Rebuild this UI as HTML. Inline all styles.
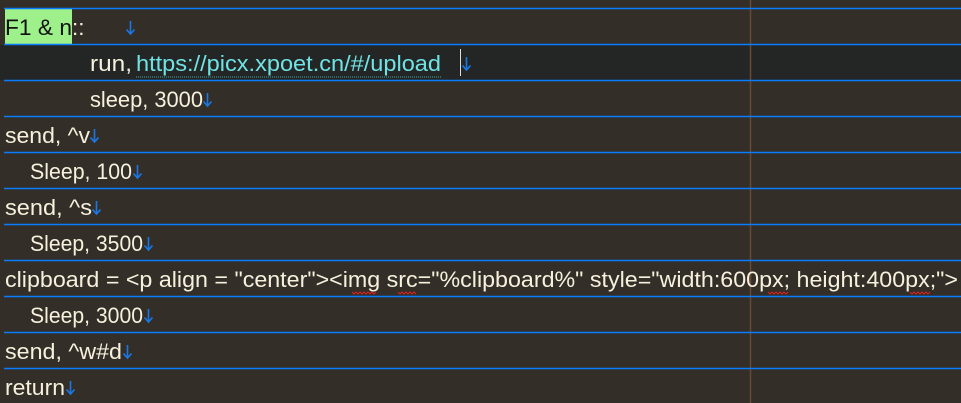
<!DOCTYPE html>
<html><head><meta charset="utf-8"><style>
html,body{margin:0;padding:0;background:#332e28;}
svg{display:block}
text{font-family:"Liberation Sans","Noto Sans CJK SC",sans-serif;font-size:22.5px;fill:#f6f1dc}
.u{fill:#6fe3e3}
</style></head><body>
<svg width="961" height="403" viewBox="0 0 961 403" xmlns="http://www.w3.org/2000/svg">
<defs><path id="ar" d="M4.5 0 V13 M0.5 8.5 L4.5 13 L8.5 8.5" fill="none" stroke="#1a78e6" stroke-width="1.6"/></defs>
<rect width="961" height="403" fill="#332e28"/>
<rect x="0" y="45" width="961" height="35" fill="#232625"/>
<rect x="5" y="9" width="67" height="35" fill="#9ef08a"/>
<line x1="750.5" y1="0" x2="750.5" y2="403" stroke="#6b4a35" stroke-width="1.5"/>
<g stroke="#0a7cff" stroke-width="1.6">
<line x1="4" y1="8.5" x2="961" y2="8.5"/><line x1="4" y1="44.5" x2="961" y2="44.5"/>
<line x1="4" y1="80.5" x2="961" y2="80.5"/><line x1="4" y1="116.5" x2="961" y2="116.5"/>
<line x1="4" y1="152.5" x2="961" y2="152.5"/><line x1="4" y1="188.5" x2="961" y2="188.5"/>
<line x1="4" y1="224.5" x2="961" y2="224.5"/><line x1="4" y1="260.5" x2="961" y2="260.5"/>
<line x1="4" y1="296.5" x2="961" y2="296.5"/><line x1="4" y1="332.5" x2="961" y2="332.5"/>
<line x1="4" y1="368.5" x2="961" y2="368.5"/>
</g>
<text x="5" y="35" textLength="67" lengthAdjust="spacingAndGlyphs" style="fill:#111">F1 &amp; n</text>
<text x="72" y="35">::</text>
<use href="#ar" x="126" y="21"/>
<text x="90" y="71" textLength="42" lengthAdjust="spacingAndGlyphs">run,</text>
<text class="u" x="136" y="71" textLength="305" lengthAdjust="spacingAndGlyphs">https://picx.xpoet.cn/#/upload</text>
<line x1="136" y1="77" x2="441" y2="77" stroke="#4aa6a0" stroke-width="1" stroke-dasharray="1,1"/>
<line x1="460.5" y1="49" x2="460.5" y2="76" stroke="#ddd" stroke-width="1"/>
<use href="#ar" x="462" y="57"/>
<text x="90" y="107" textLength="113" lengthAdjust="spacingAndGlyphs">sleep, 3000</text><use href="#ar" x="203" y="93"/>
<text x="5" y="143" textLength="85" lengthAdjust="spacingAndGlyphs">send, ^v</text><use href="#ar" x="90" y="129"/>
<text x="30" y="179" textLength="102" lengthAdjust="spacingAndGlyphs">Sleep, 100</text><use href="#ar" x="133" y="165"/>
<text x="5" y="215" textLength="87" lengthAdjust="spacingAndGlyphs">send, ^s</text><use href="#ar" x="92" y="201"/>
<text x="30" y="251" textLength="113" lengthAdjust="spacingAndGlyphs">Sleep, 3500</text><use href="#ar" x="144" y="237"/>
<text x="5" y="287" textLength="953" lengthAdjust="spacingAndGlyphs">clipboard = &lt;p align = "center"&gt;&lt;img src="%clipboard%" style="width:600px; height:400px;"&gt;</text>
<g fill="none" stroke="#e02020" stroke-width="1">
<path d="M352 292 l2 2 2-2 2 2 2-2 2 2 2-2 2 2 2-2 2 2 2-2 2 2 2-2"/>
<path d="M398 292 l2 2 2-2 2 2 2-2 2 2 2-2 2 2 2-2 2 2"/>
<path d="M768 292 l2 2 2-2 2 2 2-2 2 2 2-2 2 2 2-2 2 2 2-2"/>
<path d="M910 292 l2 2 2-2 2 2 2-2 2 2 2-2 2 2 2-2 2 2 2-2"/>
</g>
<text x="30" y="323" textLength="113" lengthAdjust="spacingAndGlyphs">Sleep, 3000</text><use href="#ar" x="144" y="309"/>
<text x="5" y="359" textLength="117" lengthAdjust="spacingAndGlyphs">send, ^w#d</text><use href="#ar" x="123" y="345"/>
<text x="5" y="395" textLength="60" lengthAdjust="spacingAndGlyphs">return</text><use href="#ar" x="66" y="381"/>
</svg>
</body></html>
